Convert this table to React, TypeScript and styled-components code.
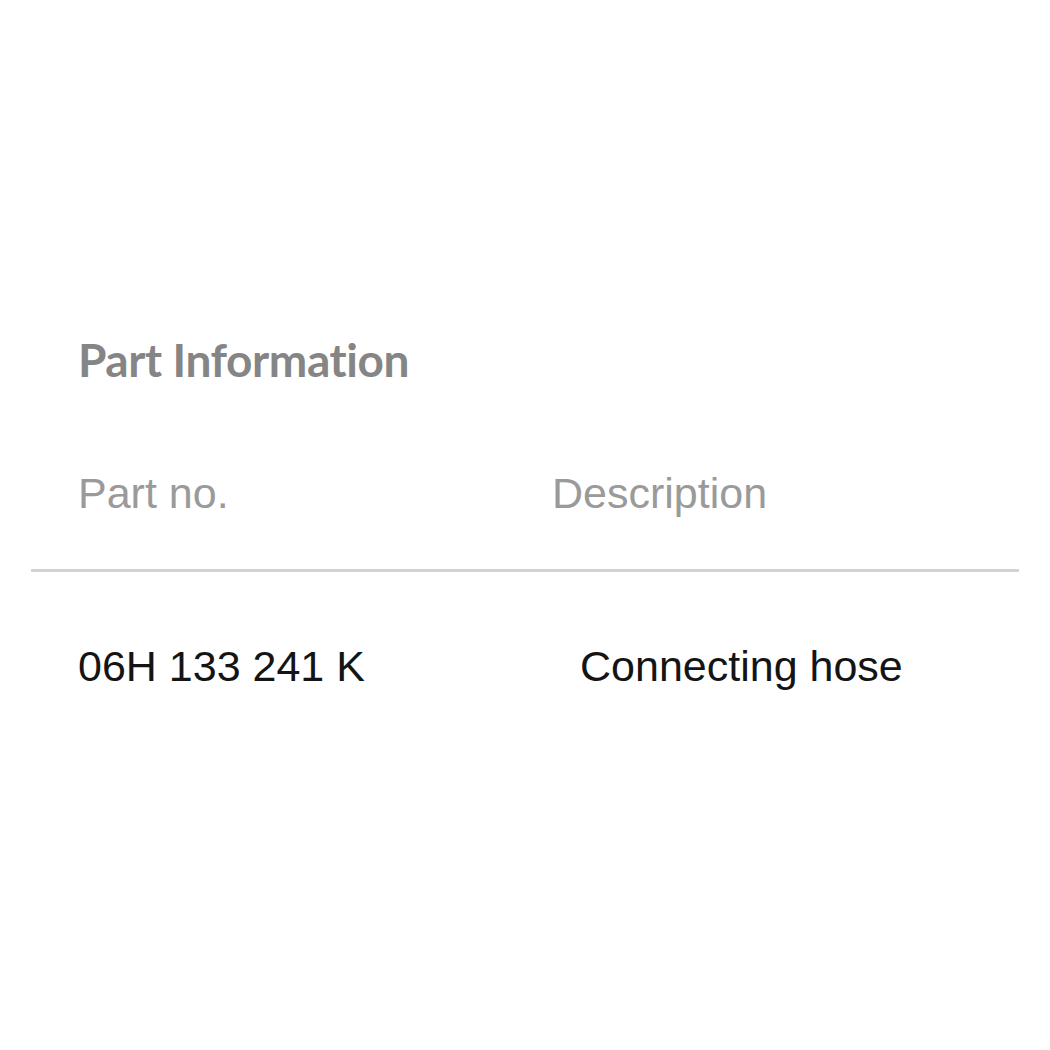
import styled, { createGlobalStyle } from 'styled-components';

const GlobalStyle = createGlobalStyle`
  body {
    margin: 0;
    background: #fff;
    font-family: "Liberation Sans", Arial, sans-serif;
  }
`

const Panel = styled.div`
  padding: 337px 31px 0;
  width: 988px;
`

const Title = styled.div`
  font-family: Lato, "Liberation Sans", sans-serif;
  font-weight: 700;
  font-size: 46px;
  line-height: 46px;
  color: #858585;
  padding-left: 47px;
  font-variant-ligatures: none;
  letter-spacing: -0.4px;
`

const Row = styled.div<{ $top: number }>`
  display: grid;
  grid-template-columns: 474px 1fr;
  padding-left: 47px;
  margin-top: ${p => p.$top}px;
`

const Cell = styled.div<{ $head?: boolean; $indent?: number }>`
  font-size: 43px;
  line-height: 50px;
  color: ${p => (p.$head ? '#9a9a9a' : '#141414')};
  padding-left: ${p => p.$indent || 0}px;
  white-space: nowrap;
`

const Divider = styled.div`
  height: 3px;
  background: #d2d2d2;
  margin-top: 51px;
`

function App() {
  return (
    <Panel>
      <GlobalStyle />
      <Title>Part Information</Title>
      <Row $top={85}>
        <Cell $head>Part no.</Cell>
        <Cell $head>Description</Cell>
      </Row>
      <Divider />
      <Row $top={69}>
        <Cell>06H 133 241 K</Cell>
        <Cell $indent={28}>Connecting hose</Cell>
      </Row>
    </Panel>
  );
}

export default App;
